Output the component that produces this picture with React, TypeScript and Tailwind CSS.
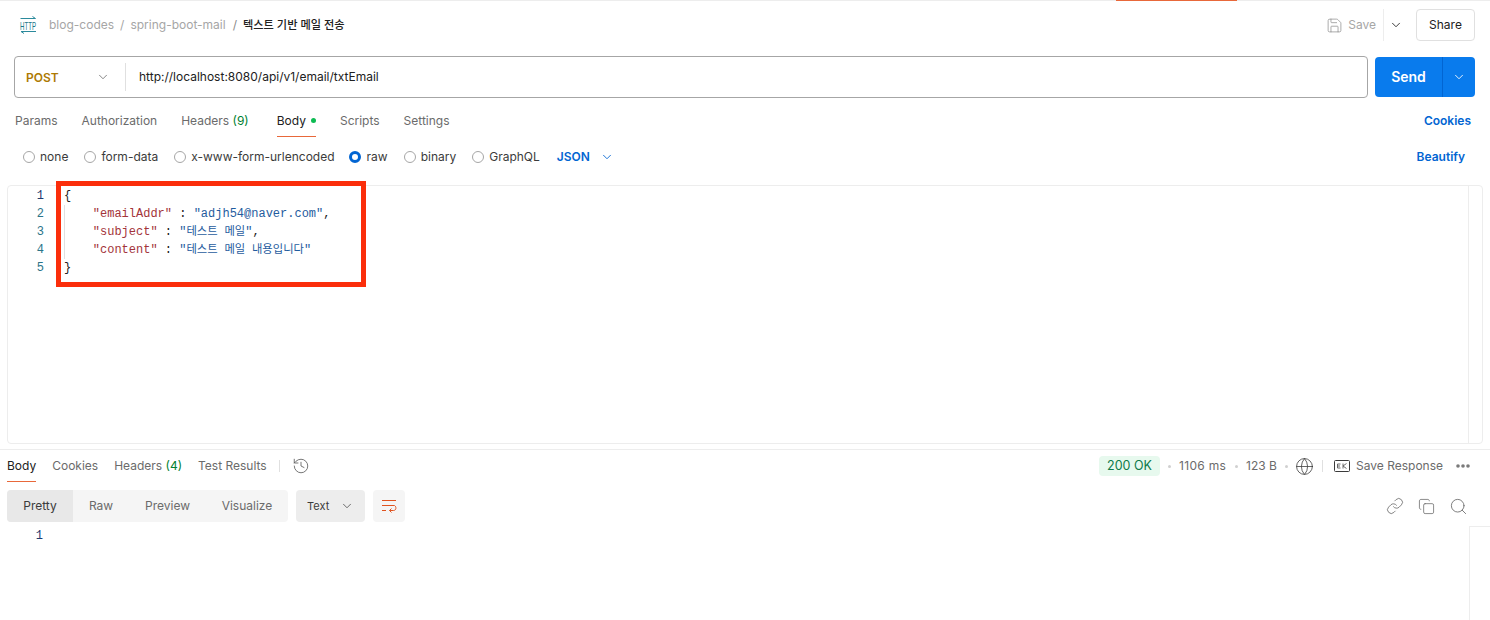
import React from "react";
import { ChevronDown, Save, Search, Copy, Link, History, Globe } from "lucide-react";

const sans = "font-['Inter','Noto_Sans_CJK_KR',sans-serif]";
const mono = "font-['Liberation_Mono','Noto_Sans_CJK_KR',monospace]";

function Radio({ label, on, wide }: { label: string; on?: boolean; wide?: boolean }) {
  return (
    <div className={wide ? "flex items-center gap-[6px]" : "flex items-center gap-[5px]"}>
      {on ? (
        <span className="w-3 h-3 rounded-full border-[3px] border-[#0265d2] bg-white" />
      ) : (
        <span className="w-3 h-3 rounded-full border border-[#a6a6a6] bg-white" />
      )}
      <span className="text-[#3b3b3b]">{label}</span>
    </div>
  );
}

function Tab({ children, active }: { children: React.ReactNode; active?: boolean }) {
  return <span className={active ? "text-[#212121]" : "text-[#6b6b6b]"}>{children}</span>;
}

function CodeLine({ n, active, children }: { n: number; active?: boolean; children?: React.ReactNode }) {
  return (
    <div className="flex h-[18px] items-center">
      <span className={active ? "w-[36px] text-right text-[#1e3a6e]" : "w-[36px] text-right text-[#2b7489]"}>{n}</span>
      <span className="ml-[20px] whitespace-pre text-[#212121]">{children}</span>
    </div>
  );
}

const K = ({ children }: { children: React.ReactNode }) => <span className="text-[#a3343a]">{children}</span>;
const V = ({ children }: { children: React.ReactNode }) => <span className="text-[#1f5c9e]">{children}</span>;
const H = ({ children }: { children: React.ReactNode }) => <span className="text-[11.3px]">{children}</span>;

export default function App() {
  return (
    <div className={`${sans} relative w-[1490px] h-[620px] bg-white overflow-hidden text-xs flex flex-col`}>
      {/* top strip */}
      <div className="h-px bg-[#ededed] shrink-0 pl-[1116px]">
        <div className="w-[121px] h-px bg-[#e8683a]" />
      </div>

      {/* header */}
      <div className="h-[48px] shrink-0 flex items-center pl-[19px] pr-[15px]">
        <svg width="18" height="18" viewBox="0 0 18 18" fill="none" overflow="visible" className="mr-[12px]">
          <path d="M1.5 2.5H16M13.5 0.5L16.5 2.5H13.5" stroke="#2b8a9c" strokeWidth="1" />
          <path d="M2 15.5H17M5 17.5L2 15.5H5" stroke="#2b8a9c" strokeWidth="1" />
          <text x="1" y="13.5" fontSize="10.5" fontFamily="Liberation Sans" fill="#1a7688" textLength="16" lengthAdjust="spacingAndGlyphs">HTTP</text>
        </svg>
        <span className="text-[#a6a6a6]">blog-codes</span>
        <span className="text-[#a6a6a6] mx-[6px]">/</span>
        <span className="text-[#a6a6a6]">spring-boot-mail</span>
        <span className="text-[#8a8a8a] ml-[7px] mr-[6px]">/</span>
        <span className="text-[#212121] font-medium text-[11.2px]">텍스트 기반 메일 전송</span>
        <div className="ml-auto flex items-center">
          <Save size={17} strokeWidth={1} className="text-[#8a8a8a] mr-[5px]" />
          <span className="text-[#a6a6a6]">Save</span>
          <div className="w-px h-8 bg-[#ededed] ml-[7px] mr-[5px]" />
          <ChevronDown size={14} strokeWidth={1.5} className="text-[#212121]" />
          <div className="ml-[13px] w-[59px] h-8 rounded border border-[#e0e0e0] flex items-center justify-center text-[#212121]">Share</div>
        </div>
      </div>

      {/* url bar */}
      <div className="mt-[7px] shrink-0 flex pl-[14px] pr-[15px] gap-[7px]">
        <div className="flex-1 h-[42px] rounded border border-[#a6a6a6] flex items-center">
          <span className="ml-[11px] mt-px w-[70px] font-semibold text-[#ad7a03]">POST</span>
          <ChevronDown size={14} strokeWidth={1.25} className="text-[#5a5a5a]" />
          <div className="ml-[15px] w-px h-[28px] bg-[#e0e0e0]" />
          <span className="ml-[13px] text-[#212121]">http://localhost:8080/api/v1/email/txtEmail</span>
        </div>
        <div className="w-[100px] h-10 mt-px rounded bg-[#097bed] flex items-center text-white">
          <span className="w-[67px] text-center text-sm font-semibold">Send</span>
          <div className="w-px h-10 bg-[#0265d2]" />
          <ChevronDown size={14} strokeWidth={1.5} className="ml-[9px]" />
        </div>
      </div>

      {/* tabs */}
      <div className="mt-[14px] h-[26px] shrink-0 flex items-start px-[15px] pt-px">
        <Tab>Params</Tab>
        <span className="ml-[24px]"><Tab>Authorization</Tab></span>
        <span className="ml-[24px]"><Tab>Headers <span className="text-[#007f31]">(9)</span></Tab></span>
        <div className="ml-[28px] flex items-center gap-[5px] h-[26px] -mt-[2px] pb-[6px] border-b border-[#e8683a]">
          <Tab active>Body</Tab>
          <span className="w-[5px] h-[5px] rounded-full bg-[#0cbb52]" />
        </div>
        <span className="ml-[24px]"><Tab>Scripts</Tab></span>
        <span className="ml-[24px]"><Tab>Settings</Tab></span>
        <span className="ml-auto mr-[4px] font-semibold text-[#0265d2]">Cookies</span>
      </div>

      {/* body types */}
      <div className="mt-[6px] h-[26px] shrink-0 flex items-center pl-[23px] pr-[25px]">
        <Radio label="none" />
        <div className="ml-[16px]"><Radio label="form-data" /></div>
        <div className="ml-[16px]"><Radio label="x-www-form-urlencoded" /></div>
        <div className="ml-[14px]"><Radio label="raw" on wide /></div>
        <div className="ml-[16px]"><Radio label="binary" /></div>
        <div className="ml-[16px]"><Radio label="GraphQL" /></div>
        <span className="ml-[17px] font-semibold text-[#0265d2]">JSON</span>
        <ChevronDown size={14} strokeWidth={1.5} className="ml-[10px] text-[#0265d2]" />
        <span className="ml-auto font-semibold text-[#0265d2]">Beautify</span>
      </div>

      {/* editor */}
      <div className={`${mono} mt-[15px] mx-[7px] h-[259px] shrink-0 border border-[#ededed] rounded-sm overflow-hidden`}>
        <div className="relative h-full w-[1461px] border-r border-[#ededed] pt-px">
          <CodeLine n={1} active>{"{"}</CodeLine>
          <CodeLine n={2}>{"    "}<K>"emailAddr"</K>{" : "}<V>"adjh54@naver.com"</V>,</CodeLine>
          <CodeLine n={3}>{"    "}<K>"subject"</K>{" : "}<V>"<H>테스트 메일</H>"</V>,</CodeLine>
          <CodeLine n={4}>{"    "}<K>"content"</K>{" : "}<V>"<H>테스트 메일 내용입니다</H>"</V></CodeLine>
          <CodeLine n={5}>{"}"}</CodeLine>
          {/* indent guide */}
          <div className="absolute left-[56px] top-[19px] w-px h-[54px] bg-[#e0e0e0]" />
        </div>
      </div>

      <div className="mt-[5px] h-px bg-[#ededed] shrink-0" />

      {/* response tabs */}
      <div className="h-[32px] shrink-0 flex items-center px-[7px]">
        <div className="h-[32px] flex items-center border-b border-[#e8683a]"><Tab active>Body</Tab></div>
        <span className="ml-[16px]"><Tab>Cookies</Tab></span>
        <span className="ml-[16px]"><Tab>Headers <span className="text-[#007f31]">(4)</span></Tab></span>
        <span className="ml-[16px]"><Tab>Test Results</Tab></span>
        <div className="ml-[12px] w-px h-[12px] bg-[#e0e0e0]" />
        <History size={18} strokeWidth={1.1} className="ml-[12px] text-[#5a5a5a]" />
        <div className="ml-auto pr-[13px] flex items-center text-[#6b6b6b]">
          <span className="w-[61px] h-5 rounded bg-[#e7f9ee] text-[#0e7a49] text-[12.5px] flex items-center justify-center">200 OK</span>
          <span className="w-[3px] h-[3px] rounded-full bg-[#d0d0d0] mx-[8px]" />
          <span className="w-[47px] tracking-[0.3px] whitespace-nowrap">1106 ms</span>
          <span className="w-[3px] h-[3px] rounded-full bg-[#d0d0d0] ml-[9px] mr-[8px]" />
          <span className="w-[31px] whitespace-nowrap">123 B</span>
          <span className="w-[3px] h-[3px] rounded-full bg-[#d0d0d0] ml-[8px] mr-[7px]" />
          <Globe size={19} strokeWidth={1} className="text-[#3b3b3b]" />
          <div className="w-px h-3 bg-[#e0e0e0] ml-[8px] mr-[11px]" />
          <svg width="16" height="12" viewBox="0 0 16 12" fill="none" className="mr-[6px]">
            <rect x="0.5" y="0.5" width="15" height="11" rx="1" stroke="#3b3b3b" />
            <path d="M6.5 4H3.5V8H6.5M3.5 6H6M9 3.5V8.5M12.5 3.5L9 6L12.5 8.5" stroke="#5a5a5a" strokeWidth="0.9" />
          </svg>
          <span>Save Response</span>
          <svg width="14" height="6" viewBox="0 0 14 6" className="ml-[13px]" fill="#7a7a7a">
            <circle cx="2" cy="3" r="1.8" />
            <circle cx="7" cy="3" r="1.8" />
            <circle cx="12" cy="3" r="1.8" />
          </svg>
        </div>
      </div>

      {/* response toolbar */}
      <div className="mt-[8px] h-8 shrink-0 flex items-center px-[7px]">
        <div className="w-[281px] h-8 rounded bg-[#f5f5f5] flex items-center text-[#6b6b6b]">
          <span className="w-[66px] h-8 rounded-l bg-[#e8e8e8] flex items-center justify-center text-[#3b3b3b]">Pretty</span>
          <span className="w-[56px] text-center">Raw</span>
          <span className="w-[77px] text-center">Preview</span>
          <span className="w-[82px] text-center">Visualize</span>
        </div>
        <div className="ml-2 w-[69px] h-8 rounded bg-[#ededed] flex items-center pl-[11px] text-[11px] text-[#3b3b3b]">
          Text
          <ChevronDown size={14} strokeWidth={1.25} className="ml-[11px]" />
        </div>
        <div className="ml-2 w-8 h-8 rounded bg-[#f5f5f5] flex items-center justify-center">
          <svg width="16" height="14" viewBox="0 0 16 14" fill="none" stroke="#e05320" strokeWidth="1">
            <path d="M1 1.5H15M1 6.5H13.5M1 11.5H5M13.5 6.5C15.5 7.5 15.5 11.5 12.5 11.5H8.5M10.5 9.5L8.5 11.5L10.5 13.5" />
          </svg>
        </div>
        <div className="ml-auto flex items-center gap-[14px] pr-[15px] text-[#6b6b6b]">
          <Link size={18} strokeWidth={1.1} />
          <Copy size={17} strokeWidth={1.1} />
          <Search size={19} strokeWidth={1.1} />
        </div>
      </div>

      {/* response code */}
      <div className={`${mono} mt-[4px] flex-1 flex`}>
        <div className="flex-1 h-[19px] pt-px flex items-center">
          <span className="w-[43px] text-right text-[#1e3a6e]">1</span>
        </div>
        <div className="w-[21px] border-l border-t border-[#ededed]" />
      </div>

      {/* annotation box */}
      <div className="absolute left-[56px] top-[181px] w-[310px] h-[106px] border-[5px] border-[#fb2e0b] pointer-events-none" />
    </div>
  );
}
